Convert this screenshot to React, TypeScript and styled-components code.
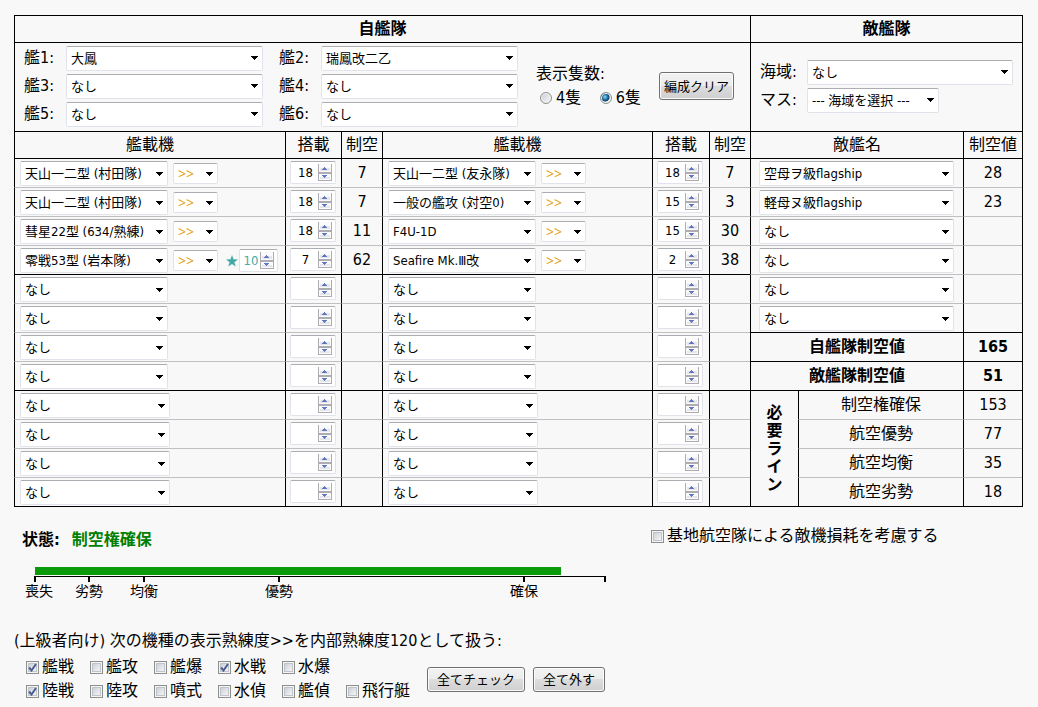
import React, { useState } from 'react';
import styled, { createGlobalStyle } from 'styled-components';

const GlobalStyle = createGlobalStyle`
  * { box-sizing: border-box; }
  body {
    margin: 0;
    background: #f8f8f8;
    color: #000;
    font-family: "DejaVu Sans Condensed", "Noto Sans CJK JP", sans-serif;
    font-size: 16px;
    line-height: 24px;
  }
  button, input, select { font-family: inherit; color: inherit; margin: 0; }
`;

const Page = styled.main`
  min-width: 1009px;
  padding: 15px 15px 8px 14px;
`;

/* ---------- form controls ---------- */

const SelectBox = styled.span<{ $width: number }>`
  display: inline-grid;
  align-items: center;
  flex: none;
  width: ${(p) => p.$width}px;
`;

const NativeSelect = styled.select<{ $rank?: boolean }>`
  grid-area: 1 / 1;
  appearance: none;
  width: 100%;
  height: ${(p) => (p.$rank ? 21 : 25)}px;
  padding: 0 4px;
  border: 1px solid #e2e3ea;
  border-top-color: #abadb3;
  border-radius: 2px;
  background: #fff;
  font-size: ${(p) => (p.$rank ? 14 : 13)}px;
  ${(p) => p.$rank && 'color: #e0a418; font-family: "Noto Sans", sans-serif;'}
`;

const Arrow = styled.svg`
  grid-area: 1 / 1;
  justify-self: end;
  margin-right: 5px;
  pointer-events: none;
`;

interface SelectProps {
  value: string;
  width: number;
  rank?: boolean;
  id?: string;
  label?: string;
}

function Select({ value, width, rank, id, label }: SelectProps) {
  return (
    <SelectBox $width={width}>
      <NativeSelect $rank={rank} id={id} aria-label={label} defaultValue={value}>
        <option>{value}</option>
      </NativeSelect>
      <Arrow width="7" height="4" shapeRendering="crispEdges" aria-hidden>
        <path d="M0 0h7v1H0zM1 1h5v1H1zM2 2h3v1H2zM3 3h1v1H3z" />
      </Arrow>
    </SelectBox>
  );
}

const SpinBox = styled.span<{ $width: number }>`
  display: inline-grid;
  align-items: center;
  flex: none;
  width: ${(p) => p.$width}px;
`;

const NumberInput = styled.input<{ $star?: boolean }>`
  grid-area: 1 / 1;
  appearance: textfield;
  width: 100%;
  height: 23px;
  padding: 0 18px 0 3px;
  border: 1px solid #e2e3ea;
  border-top-color: #abadb3;
  border-radius: 2px;
  background: #fff;
  color: ${(p) => (p.$star ? '#45aaa6' : '#000')};
  font-size: 13px;
  text-align: center;
  &::-webkit-inner-spin-button { appearance: none; margin: 0; }
`;

const SpinArrows = styled.svg`
  grid-area: 1 / 1;
  justify-self: end;
  margin-right: 4px;
  pointer-events: none;
`;

function Spinner({ value, width, star, label }: { value: string; width: number; star?: boolean; label: string }) {
  return (
    <SpinBox $width={width}>
      <NumberInput type="number" $star={star} defaultValue={value} aria-label={label} />
      <SpinArrows width="14" height="17" shapeRendering="crispEdges" aria-hidden>
        <path fill="#acacb2" d="M0 0h14v17H0z" />
        <path fill="#fafafa" d="M1 0h12v8H1zM1 10h12v6H1z" />
        <path fill="#e6e6e8" d="M2 4h10v3H2zM2 13h10v2H2z" />
        <path fill="#6078c4" d="M6 3h1v1H6zM5 4h3v1H5zM4 5h5v1H4zM4 11h5v1H4zM5 12h3v1H5zM6 13h1v1H6z" />
      </SpinArrows>
    </SpinBox>
  );
}

const Choice = styled.label<{ $gap: number }>`
  display: inline-flex;
  align-items: center;
  gap: ${(p) => p.$gap}px;
  white-space: nowrap;
`;

const CheckWrap = styled.span`
  display: inline-grid;
  place-items: center;
`;

const CheckInput = styled.input`
  grid-area: 1 / 1;
  appearance: none;
  width: 13px;
  height: 13px;
  border: 1px solid #8e8f8f;
  background: linear-gradient(135deg, #cdd1d6, #f4f5f6) content-box, #f4f4f4;
  padding: 2px;
  box-shadow: inset 0 0 0 1px #f4f4f4, inset 0 0 0 2px #bfc4ca;
`;

const CheckMark = styled.svg`
  grid-area: 1 / 1;
  pointer-events: none;
`;

interface CheckProps {
  text: string;
  checked: boolean;
  gap?: number;
  onChange: (on: boolean) => void;
}

function Check({ text, checked, gap = 3, onChange }: CheckProps) {
  return (
    <Choice $gap={gap}>
      <CheckWrap>
        <CheckInput type="checkbox" checked={checked} onChange={(e) => onChange(e.target.checked)} />
        {checked && (
          <CheckMark width="9" height="9" viewBox="0 0 9 9" aria-hidden>
            <path d="M1 4.5 3.5 7.5 8 1" fill="none" stroke="#4a5f97" strokeWidth="2" />
          </CheckMark>
        )}
      </CheckWrap>
      {text}
    </Choice>
  );
}

const RadioInput = styled.input`
  appearance: none;
  width: 12px;
  height: 12px;
  border: 1px solid #8e8f8f;
  border-radius: 50%;
  background: linear-gradient(135deg, #c8ccd0, #fafafa);
  box-shadow: inset 0 0 0 1px #f4f4f4;
  &:checked {
    background: radial-gradient(circle at 40% 40%, #9fdcf5 0, #2a86b5 25%, #123f63 50%, #e8eef2 58%);
  }
`;

const Button = styled.button<{ $tall?: boolean }>`
  height: ${(p) => (p.$tall ? 28 : 25)}px;
  padding: 0 ${(p) => (p.$tall ? 4 : 9)}px 1px;
  border: 1px solid #707070;
  border-radius: 3px;
  background: linear-gradient(#f2f2f2, #ebebeb 50%, #dddddd 50%, #cfcfcf);
  box-shadow: inset 0 0 0 1px #fbfbfb;
  font-size: 13px;
  white-space: nowrap;
`;

/* ---------- fleet table ---------- */

const FleetTable = styled.table`
  width: 100%;
  table-layout: fixed;
  border-spacing: 0;
  border: solid #000;
  border-width: 0 1px 1px 0;
`;

const Row = styled.tr<{ $height: number }>`
  height: ${(p) => p.$height}px;
`;

const HeadCell = styled.th<{ $strong?: boolean }>`
  padding: 0;
  border: solid #000;
  border-width: 1px 0 0 1px;
  font-weight: ${(p) => (p.$strong ? 700 : 400)};
  white-space: nowrap;
`;

const Cell = styled.td<{ $soft?: boolean; $pad?: string }>`
  padding: ${(p) => p.$pad ?? '0'};
  border: solid #000;
  border-width: 1px 0 0 1px;
  ${(p) => p.$soft && 'border-top-color: #c0c0c0;'}
  text-align: center;
  vertical-align: middle;
`;

const ControlCell = styled(Cell)`
  vertical-align: top;
  text-align: left;
`;

const SideTitle = styled(HeadCell)`
  line-height: 18px;
  span { display: block; width: 16px; margin: 0 auto; white-space: normal; word-break: break-all; }
`;

const LineName = styled.th<{ $soft?: boolean }>`
  padding: 0;
  border: solid #000;
  border-width: 1px 0 0 1px;
  ${(p) => p.$soft && 'border-top-color: #c0c0c0;'}
  font-weight: 400;
`;

const Inline = styled.div<{ $gap: number }>`
  display: flex;
  align-items: center;
  gap: ${(p) => p.$gap}px;
`;

const StarGroup = styled.span`
  display: flex;
  align-items: center;
  gap: 1px;
  margin-left: 3px;
`;

const ShipPicker = styled.div`
  display: flex;
  align-items: center;
  gap: 18px;
  text-align: left;
`;

const ShipGrid = styled.div`
  display: grid;
  grid-template-columns: auto auto;
  gap: 3px 16px;
`;

const Field = styled.div<{ $label: number }>`
  display: grid;
  grid-template-columns: ${(p) => p.$label}px auto;
  justify-content: start;
  align-items: center;
`;

const EnemyFields = styled.div`
  display: grid;
  gap: 3px;
`;

const CountSet = styled.fieldset`
  margin: 0;
  padding: 0;
  border: 0;
  width: 105px;
  legend { padding: 0; }
`;

const CountChoices = styled.div`
  display: flex;
  justify-content: space-between;
  padding-left: 4px;
`;

/* ---------- lower part ---------- */

const StatusRow = styled.div`
  display: grid;
  grid-template-columns: 637fr 372fr;
  align-items: start;
  margin-top: 17px;
`;

const Status = styled.strong`
  display: flex;
  gap: 12px;
  padding: 4px 8px 0;
`;

const Good = styled.span`
  color: #008000;
`;

const Gauge = styled.svg`
  display: block;
  margin: 15px 0 0 10px;
  font-size: 14px;
`;

const Note = styled.p`
  margin: 28px 0 0;
`;

const Proficiency = styled.div`
  display: flex;
  align-items: center;
  gap: 17px;
  margin: 2px 0 0 12px;
`;

const TypeGrid = styled.div`
  display: grid;
  grid-template-columns: repeat(6, 64px);
`;

const Actions = styled.div`
  display: flex;
  gap: 8px;
`;

interface Slot {
  plane: string;
  count: string;
  air: string;
  star?: string;
}

const NONE = 'なし';
const empty: Slot = { plane: NONE, count: '', air: '' };

const leftSlots: Slot[] = [
  { plane: '天山一二型 (村田隊)', count: '18', air: '7' },
  { plane: '天山一二型 (村田隊)', count: '18', air: '7' },
  { plane: '彗星22型 (634/熟練)', count: '18', air: '11' },
  { plane: '零戦53型 (岩本隊)', count: '7', air: '62', star: '10' },
  ...Array(8).fill(empty),
];

const rightSlots: Slot[] = [
  { plane: '天山一二型 (友永隊)', count: '18', air: '7' },
  { plane: '一般の艦攻 (対空0)', count: '15', air: '3' },
  { plane: 'F4U-1D', count: '15', air: '30' },
  { plane: 'Seafire Mk.Ⅲ改', count: '2', air: '38' },
  ...Array(8).fill(empty),
];

const enemies = [
  ['空母ヲ級flagship', '28'],
  ['軽母ヌ級flagship', '23'],
  [NONE, ''],
  [NONE, ''],
  [NONE, ''],
  [NONE, ''],
];

const totals = [
  ['自艦隊制空値', '165'],
  ['敵艦隊制空値', '51'],
];

const lines = [
  ['制空権確保', '153'],
  ['航空優勢', '77'],
  ['航空均衡', '35'],
  ['航空劣勢', '18'],
];

const ships = ['大鳳', '瑞鳳改二乙', NONE, NONE, NONE, NONE];

const marks: [number, string, number][] = [
  [11, '喪失', 15],
  [65, '劣勢', 65],
  [120, '均衡', 120],
  [255, '優勢', 255],
  [500, '確保', 500],
  [581, '', 581],
];

const planeTypes = ['艦戦', '艦攻', '艦爆', '水戦', '水爆', '陸戦', '陸攻', '噴式', '水偵', '艦偵', '飛行艇'];

function SlotCells({ slot, row, side }: { slot: Slot; row: number; side: string }) {
  const soft = row % 4 !== 0;
  const name = `${side} ${row + 1}`;
  return (
    <>
      <ControlCell $soft={soft} $pad="2px 5px 1px">
        <Inline $gap={5}>
          <Select value={slot.plane} width={row < 8 ? 148 : 150} label={`艦載機 ${name}`} />
          {slot.plane !== NONE && <Select rank value=">>" width={45} label={`熟練度 ${name}`} />}
          {slot.star && (
            <StarGroup>
              <svg width="12" height="12" viewBox="0 0 12 12" aria-hidden>
                <path fill="#45aaa6" d="M6 0 7.5 4.2 12 4.4 8.4 7.2 9.7 11.6 6 9 2.3 11.6 3.6 7.2 0 4.4 4.5 4.2Z" />
              </svg>
              <Spinner star value={slot.star} width={39} label={`改修 ${name}`} />
            </StarGroup>
          )}
        </Inline>
      </ControlCell>
      <ControlCell $soft={soft} $pad="2px 4px 0">
        <Inline $gap={0}>
          <Spinner value={slot.count} width={46} label={`搭載 ${name}`} />
        </Inline>
      </ControlCell>
      <Cell $soft={soft}>{slot.air}</Cell>
    </>
  );
}

function EnemyCells({ row }: { row: number }) {
  if (row < 6) {
    const [name, air] = enemies[row];
    return (
      <>
        <ControlCell colSpan={2} $soft={row > 0} $pad="2px 8px 1px">
          <Inline $gap={0}>
            <Select value={name} width={195} label={`敵艦 ${row + 1}`} />
          </Inline>
        </ControlCell>
        <Cell $soft={row > 0}>{air}</Cell>
      </>
    );
  }
  if (row < 8) {
    const [name, air] = totals[row - 6];
    return (
      <>
        <HeadCell $strong colSpan={2} scope="row">{name}</HeadCell>
        <Cell><strong>{air}</strong></Cell>
      </>
    );
  }
  const [name, air] = lines[row - 8];
  return (
    <>
      {row === 8 && (
        <SideTitle $strong rowSpan={4} scope="rowgroup"><span>必要ライン</span></SideTitle>
      )}
      <LineName scope="row" $soft={row > 8}>{name}</LineName>
      <Cell $soft={row > 8}>{air}</Cell>
    </>
  );
}

const Col = styled.col<{ $width?: number }>`
  ${(p) => p.$width && `width: ${p.$width}px;`}
`;

export default function App() {
  const [base, setBase] = useState(false);
  const [picked, setPicked] = useState<string[]>(['艦戦', '水戦', '陸戦']);

  const toggle = (type: string, on: boolean) =>
    setPicked((now) => (on ? [...now, type] : now.filter((t) => t !== type)));

  return (
    <Page>
      <GlobalStyle />
      <FleetTable>
        <colgroup>
          <Col $width={271} />
          <Col $width={56} />
          <Col $width={41} />
          <Col />
          <Col $width={57} />
          <Col $width={41} />
          <Col $width={48} />
          <Col $width={165} />
          <Col $width={59} />
        </colgroup>
        <thead>
          <Row $height={27}>
            <HeadCell $strong colSpan={6}>自艦隊</HeadCell>
            <HeadCell $strong colSpan={3}>敵艦隊</HeadCell>
          </Row>
          <Row $height={89}>
            <Cell colSpan={6} $pad="0 9px 2px">
              <ShipPicker>
                <ShipGrid>
                  {ships.map((ship, i) => (
                    <Field key={i} $label={42}>
                      <Choice $gap={0} htmlFor={`ship${i}`}>{`艦${i + 1}:`}</Choice>
                      <Select id={`ship${i}`} value={ship} width={197} />
                    </Field>
                  ))}
                </ShipGrid>
                <CountSet>
                  <legend>表示隻数:</legend>
                  <CountChoices>
                    <Choice $gap={4}><RadioInput type="radio" name="count" />4隻</Choice>
                    <Choice $gap={4}><RadioInput type="radio" name="count" defaultChecked />6隻</Choice>
                  </CountChoices>
                </CountSet>
                <Button type="button" $tall>編成クリア</Button>
              </ShipPicker>
            </Cell>
            <Cell colSpan={3} $pad="0 9px 2px">
              <EnemyFields>
                <Field $label={47}>
                  <Choice $gap={0} htmlFor="area">海域:</Choice>
                  <Select id="area" value={NONE} width={206} />
                </Field>
                <Field $label={47}>
                  <Choice $gap={0} htmlFor="node">マス:</Choice>
                  <Select id="node" value="--- 海域を選択 ---" width={132} />
                </Field>
              </EnemyFields>
            </Cell>
          </Row>
          <Row $height={27}>
            <HeadCell>艦載機</HeadCell>
            <HeadCell>搭載</HeadCell>
            <HeadCell>制空</HeadCell>
            <HeadCell>艦載機</HeadCell>
            <HeadCell>搭載</HeadCell>
            <HeadCell>制空</HeadCell>
            <HeadCell colSpan={2}>敵艦名</HeadCell>
            <HeadCell>制空値</HeadCell>
          </Row>
        </thead>
        <tbody>
          {leftSlots.map((slot, row) => (
            <Row key={row} $height={29}>
              <SlotCells slot={slot} row={row} side="左" />
              <SlotCells slot={rightSlots[row]} row={row} side="右" />
              <EnemyCells row={row} />
            </Row>
          ))}
        </tbody>
      </FleetTable>

      <StatusRow>
        <Status>
          状態:<Good>制空権確保</Good>
        </Status>
        <Check text="基地航空隊による敵機損耗を考慮する" checked={base} onChange={setBase} />
      </StatusRow>

      <Gauge width="592" height="34" role="img" aria-label="制空状態">
        <rect x="11" y="0" width="526" height="8" fill="#0a9a0a" />
        <rect x="10" y="9" width="572" height="1" />
        {marks.map(([x, text, textX]) => (
          <g key={x}>
            <rect x={x - 1} y="9" width="2" height="6" />
            <text x={textX} y="29" textAnchor="middle">{text}</text>
          </g>
        ))}
      </Gauge>

      <Note>{'(上級者向け) 次の機種の表示熟練度>>を内部熟練度120として扱う:'}</Note>
      <Proficiency>
        <TypeGrid>
          {planeTypes.slice(0, 5).map((type) => (
            <Check key={type} text={type} checked={picked.includes(type)} onChange={(on) => toggle(type, on)} />
          ))}
          <span />
          {planeTypes.slice(5).map((type) => (
            <Check key={type} text={type} checked={picked.includes(type)} onChange={(on) => toggle(type, on)} />
          ))}
        </TypeGrid>
        <Actions>
          <Button type="button" onClick={() => setPicked(planeTypes)}>全てチェック</Button>
          <Button type="button" onClick={() => setPicked([])}>全て外す</Button>
        </Actions>
      </Proficiency>
    </Page>
  );
}
